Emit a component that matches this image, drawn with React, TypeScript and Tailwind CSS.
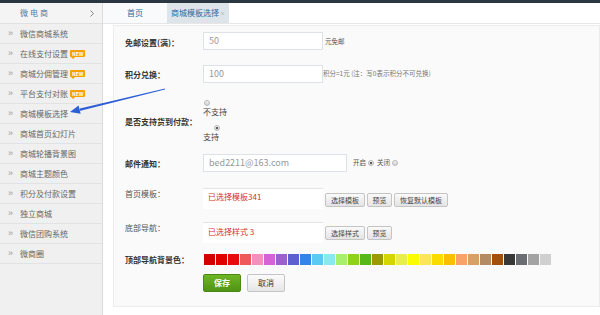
import React from "react";

const MENU = [
  { label: "微信商城系统" },
  { label: "在线支付设置", badge: true },
  { label: "商城分佣管理", badge: true },
  { label: "平台支付对账", badge: true },
  { label: "商城模板选择" },
  { label: "商城首页幻灯片" },
  { label: "商城轮播背景图" },
  { label: "商城主题颜色" },
  { label: "积分及付款设置" },
  { label: "独立商城" },
  { label: "微信团购系统" },
  { label: "微商圈" },
];

const SWATCHES = [
  "#d40000", "#e00000", "#e80b0b", "#ee5a5a", "#f48fbe", "#d562d6", "#9c5fd0",
  "#5d5fd0", "#2f86e5", "#5bcaf2", "#86eaf0", "#a8ef6c", "#8fd21a", "#58b81a",
  "#9a9a05", "#d3d600", "#e8ee4c", "#fcfc00", "#fbe55a", "#fbdc00", "#fbbe00",
  "#f8a26a", "#d9a063", "#b38a62", "#a34f0a", "#383838", "#6a6e73", "#a3a3a3",
  "#d0d0d0",
];

function NewBadge() {
  return (
    <span className="relative ml-[2px] inline-flex h-[7px] items-center rounded-[1px] bg-[#f5a200] px-[2px] text-[5px] font-bold leading-none text-white">
      NEW
      <span className="absolute bottom-[-2px] left-[1px] h-0 w-0 border-l-[2px] border-r-[2px] border-t-[2px] border-l-transparent border-r-transparent border-t-[#f5a200]" />
    </span>
  );
}

function Radio({ checked = false }: { checked?: boolean }) {
  return (
    <span className="inline-flex h-[6px] w-[6px] items-center justify-center rounded-full border border-[#b8b8b8] bg-gradient-to-b from-[#f2f2f2] to-[#d4d4d4]">
      {checked && <span className="h-[2px] w-[2px] rounded-full bg-[#333]" />}
    </span>
  );
}

function SmallButton({ children, w }: { children: React.ReactNode; w: string }) {
  return (
    <button
      className={`${w} flex h-[14px] items-center justify-center rounded-[2px] border border-[#c4c4c4] bg-gradient-to-b from-[#fafafa] to-[#e4e4e4] text-[7px] text-[#444]`}
    >
      {children}
    </button>
  );
}

export default function App() {
  return (
    <div className="relative h-[315px] w-[600px] overflow-hidden bg-white font-['Noto_Sans_CJK_SC','Noto_Sans',sans-serif]">
      <div className="h-[3px] bg-[#2b3643]" />
      <div className="flex h-[312px]">
        {/* SIDEBAR */}
        <aside className="w-[103px] shrink-0 border-r border-[#dcdcdc] bg-[#f0f0f0]">
          <div className="flex h-[21px] items-center justify-between border-b border-[#e0e0e0] bg-[#f4f4f4] pl-[20px] pr-[8px]">
            <span className="text-[8px] tracking-[2px] text-[#4b7aa6]">微电商</span>
            <svg width="4" height="7" viewBox="0 0 4 7">
              <path d="M0.5 0.5 L3.5 3.5 L0.5 6.5" fill="none" stroke="#777" strokeWidth="0.9" />
            </svg>
          </div>
          {MENU.map((m) => (
            <div
              key={m.label}
              className="flex h-[20px] items-center border-b border-[#e2e2e2] pl-[8px]"
            >
              <span className="w-[12px] font-['Liberation_Sans',sans-serif] text-[9px] leading-none text-[#9a9a9a]">»</span>
              <span className="text-[8px] text-[#666]">{m.label}</span>
              {m.badge && <NewBadge />}
            </div>
          ))}
        </aside>

        {/* MAIN */}
        <main className="flex min-w-0 flex-1 flex-col">
          <div className="flex h-[21px] shrink-0 border-b border-[#e6e6e6] bg-white">
            <div className="flex w-[64px] items-center justify-center bg-[#f9fafb] text-[8px] text-[#2b6aa0]">
              首页
            </div>
            <div className="flex w-[62px] items-center justify-center bg-[#dde5ea] text-[8px] text-[#2b6aa0]">
              商城模板选择<span className="ml-[1px] text-[5px] text-[#999]">×</span>
            </div>
          </div>

          <div className="flex-1 pb-[8px] pl-[10px] pt-[1px]">
            <div className="h-[282px] border border-[#ececec] bg-[#fafafa] pl-[11px] pt-[6px]">
              {/* 免邮 */}
              <div className="flex h-[18px] items-center">
                <div className="w-[78px] pt-[3px] text-[8px] font-bold text-[#333]">免邮设置(满)：</div>
                <div className="flex h-[18px] w-[120px] items-center border border-[#dde2e8] bg-white pl-[5px] text-[9px] text-[#999]">
                  50
                </div>
                <span className="ml-[2px] pt-[2px] text-[6.5px] text-[#555]">元免邮</span>
              </div>

              {/* 积分 */}
              <div className="mt-[15px] flex h-[18px] items-center">
                <div className="w-[78px] pt-[2px] text-[8px] font-bold text-[#333]">积分兑换：</div>
                <div className="flex h-[18px] w-[120px] items-center border border-[#dde2e8] bg-white pl-[5px] text-[9px] text-[#999]">
                  100
                </div>
                <span className="text-[6.5px] text-[#777]">积分=1元 (注：写0表示积分不可兑换)</span>
              </div>

              {/* 货到付款 */}
              <div className="mt-[16px] flex h-[44px] items-center">
                <div className="w-[78px] pt-[2px] text-[8px] font-bold text-[#333]">是否支持货到付款：</div>
                <div className="flex flex-col text-[8px] leading-[10px] text-[#444]">
                  <div className="flex h-[6px] pl-[1px]">
                    <Radio />
                  </div>
                  <div className="mt-[1px]">不支持</div>
                  <div className="mt-[8px] flex h-[6px] pl-[11px]">
                    <Radio checked />
                  </div>
                  <div className="mt-[1px]">支持</div>
                </div>
              </div>

              {/* 邮件通知 */}
              <div className="mt-[11px] flex h-[18px] items-center">
                <div className="w-[78px] pt-[2px] text-[8px] font-bold text-[#333]">邮件通知：</div>
                <div className="flex h-[18px] w-[144px] items-center border border-[#dde2e8] bg-white pl-[5px] text-[9px] text-[#999]">
                  bed2211@163.com
                </div>
                <span className="ml-[6px] text-[6.5px] text-[#555]">开启</span>
                <span className="ml-[2px] flex">
                  <Radio checked />
                </span>
                <span className="ml-[3px] text-[6.5px] text-[#555]">关闭</span>
                <span className="ml-[2px] flex">
                  <Radio />
                </span>
              </div>

              {/* 首页模板 */}
              <div className="mt-[16px] flex h-[21px] items-start">
                <div className="w-[78px] text-[8px] text-[#555]">首页模板：</div>
                <div className="h-[21px] w-[120px] border-t border-[#e4e4e4] bg-white pl-[5px] pt-[2px] text-[8px] text-[#d9302c]">
                  已选择模板341
                </div>
                <div className="ml-[2px] mt-[5px] flex gap-[2px]">
                  <SmallButton w="w-[40px]">选择模板</SmallButton>
                  <SmallButton w="w-[25px]">预览</SmallButton>
                  <SmallButton w="w-[54px]">恢复默认模板</SmallButton>
                </div>
              </div>

              {/* 底部导航 */}
              <div className="mt-[13px] flex h-[21px] items-start">
                <div className="w-[78px] text-[8px] text-[#555]">底部导航：</div>
                <div className="h-[21px] w-[120px] border-t border-[#e4e4e4] bg-white pl-[5px] pt-[3px] text-[8px] text-[#d9302c]">
                  已选择样式 3
                </div>
                <div className="ml-[2px] mt-[4px] flex gap-[2px]">
                  <SmallButton w="w-[40px]">选择样式</SmallButton>
                  <SmallButton w="w-[25px]">预览</SmallButton>
                </div>
              </div>

              {/* 顶部导航背景色 */}
              <div className="mt-[11px] flex h-[11px] items-center">
                <div className="w-[79px] text-[8px] font-bold text-[#333]">顶部导航背景色：</div>
                <div className="flex gap-[1px]">
                  {SWATCHES.map((c) => (
                    <span key={c} className="h-[11px] w-[11px]" style={{ backgroundColor: c }} />
                  ))}
                </div>
              </div>

              {/* actions */}
              <div className="mt-[9px] flex h-[18px] gap-[6px] pl-[78px]">
                <button className="flex h-[18px] w-[38px] items-center justify-center rounded-[2px] border border-[#4a8a14] bg-gradient-to-b from-[#6fb526] to-[#4f9414] text-[8px] font-bold text-white">
                  保存
                </button>
                <button className="flex h-[18px] w-[38px] items-center justify-center rounded-[2px] border border-[#c4c4c4] bg-gradient-to-b from-[#fbfbfb] to-[#e6e6e6] text-[8px] text-[#333]">
                  取消
                </button>
              </div>
            </div>
          </div>
        </main>
      </div>

      {/* annotation arrow */}
      <svg className="pointer-events-none absolute left-0 top-0" width="600" height="315">
        <polygon
          points="165.1,88.5 164.9,89.5 79.5,110.9 79.9,108.4"
          fill="#2c5fd6"
        />
        <polygon points="70,112 80.6,113.8 78.6,105.6" fill="#2c5fd6" />
      </svg>
    </div>
  );
}
